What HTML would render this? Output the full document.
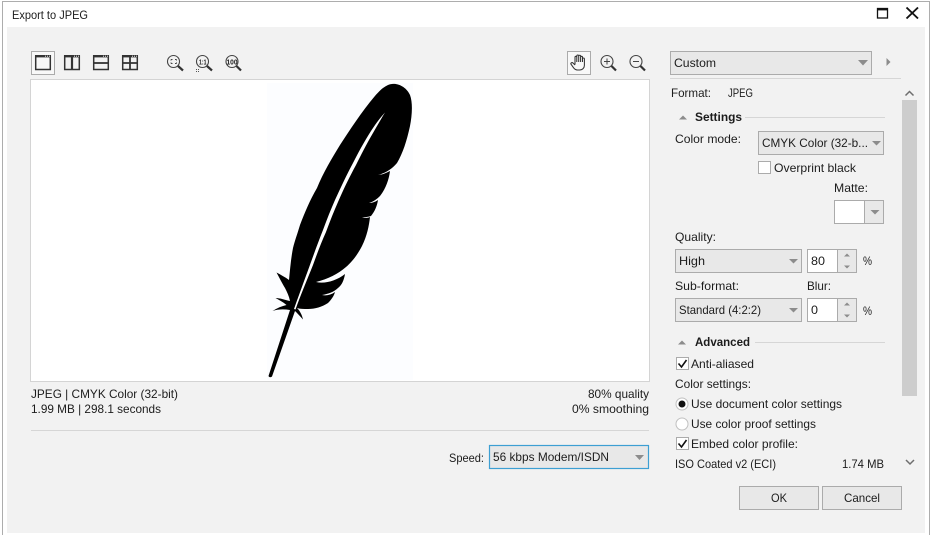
<!DOCTYPE html>
<html>
<head>
<meta charset="utf-8">
<style>
html,body{margin:0;padding:0;width:930px;height:535px;overflow:hidden;background:#fff}
svg{display:block}
text{font-family:"Liberation Sans",sans-serif;font-size:12px;fill:#1c1c1c}
.b{font-weight:bold}
.c{fill:#e8e8e8;stroke:#ababab;stroke-width:1}
.w{fill:#fff;stroke:#ababab;stroke-width:1}
.i{fill:none;stroke:#333;stroke-width:1.5}
.z{fill:none;stroke:#444;stroke-width:1.1}
.h{fill:none;stroke:#333;stroke-width:2.2}
.a{fill:#8c8c8c}
.l{stroke:#d6d6d6;stroke-width:1}
</style>
</head>
<body>
<svg width="930" height="535" viewBox="0 0 930 535" xmlns="http://www.w3.org/2000/svg">
<!-- window -->
<rect width="930" height="535" fill="#fff"/>
<path d="M2.5 535V1.5H929.5V535" fill="none" stroke="#adadad" stroke-width="1"/>
<rect x="7" y="27" width="918" height="506" fill="#f2f2f2"/>
<text x="12" y="19" textLength="76" lengthAdjust="spacingAndGlyphs">Export to JPEG</text>
<rect x="877.5" y="8.5" width="10" height="9.5" fill="none" stroke="#111" stroke-width="1.3"/>
<rect x="877" y="8" width="11" height="2.4" fill="#111"/>
<path d="M906.5 7.5L918 18.5M918 7.5L906.5 18.5" stroke="#111" stroke-width="1.9" fill="none"/>

<!-- left toolbar -->
<rect x="31.5" y="51.5" width="23" height="23" fill="#f8f8f8" stroke="#ababab"/>
<g class="i">
<rect x="35.7" y="56" width="14.6" height="13.5"/>
<rect x="64.7" y="56" width="14.6" height="13.5"/>
<path d="M72 56V69.5" stroke-width="2.2"/>
<rect x="93.7" y="56" width="14.6" height="13.5"/>
<path d="M93.7 63H108.3" stroke-width="1.8"/>
<rect x="122.7" y="56" width="14.6" height="13.5"/>
<path d="M122.7 63H137.3M130 56V69.5" stroke-width="1.8"/>
</g>
<g fill="#333">
<rect x="35" y="55" width="16" height="2.4"/><rect x="64" y="55" width="16" height="2.4"/>
<rect x="93" y="55" width="16" height="2.4"/><rect x="122" y="55" width="16" height="2.4"/>
</g>
<g fill="#e8e8e8">
<rect x="45" y="55.7" width="1" height="1"/><rect x="47" y="55.7" width="1" height="1"/><rect x="49" y="55.7" width="1" height="1"/>
<rect x="74" y="55.7" width="1" height="1"/><rect x="76" y="55.7" width="1" height="1"/><rect x="78" y="55.7" width="1" height="1"/>
<rect x="103" y="55.7" width="1" height="1"/><rect x="105" y="55.7" width="1" height="1"/><rect x="107" y="55.7" width="1" height="1"/>
<rect x="132" y="55.7" width="1" height="1"/><rect x="134" y="55.7" width="1" height="1"/><rect x="136" y="55.7" width="1" height="1"/>
</g>

<!-- zoom icons -->
<circle class="z" cx="173.5" cy="61.5" r="6"/>
<path class="h" d="M178 66L183 70.5"/>
<path d="M171 59.5h1.5M175 59.5h1.5M171 63.5h1.5M175 63.5h1.5M171 59.5v1M176.5 59.5v1M171 62.5v1M176.5 62.5v1" stroke="#444" stroke-width="1" fill="none"/>
<circle class="z" cx="202.5" cy="61.5" r="6"/>
<path class="h" d="M207 66L212 70.5"/>
<text x="199" y="64.3" textLength="7.5" lengthAdjust="spacingAndGlyphs" style="font-size:7px;font-weight:bold">1:1</text>
<path d="M196 69.5h1M198 69.5h1M196 71.5h1M198 71.5h1" stroke="#555" stroke-width="1"/>
<circle class="z" cx="232" cy="61.5" r="6"/>
<path class="h" d="M236.5 66L241 70.5"/>
<text x="226.5" y="64.3" textLength="11" lengthAdjust="spacingAndGlyphs" style="font-size:7px;font-weight:bold">100</text>

<!-- right toolbar -->
<rect x="567.5" y="51.5" width="23" height="23" fill="#f8f8f8" stroke="#ababab"/>
<path d="M575 64.5V57.3c0-1.3 1.8-1.3 1.8 0V62M576.8 62V56c0-1.3 1.9-1.3 1.9 0V62M578.7 62V56.2c0-1.3 1.9-1.3 1.9 0V62M580.6 62V57.3c0-1.3 1.9-1.3 1.9 0V62M582.5 62V59c0-1.3 1.9-1.3 1.9 0v6.3c0 2.6-1.9 4.7-4.8 4.7h-2.2c-2.1 0-3-1-4-2.4l-2.3-3.3c-.8-1.2.8-2.4 1.9-1.3L575 65" fill="none" stroke="#333" stroke-width="1.05"/>
<circle class="z" cx="607" cy="61.5" r="6"/>
<path class="h" d="M611.5 66L616 70.5"/>
<path d="M604 61.5h6M607 58.5v6" stroke="#444" stroke-width="1" fill="none"/>
<circle class="z" cx="636" cy="61.5" r="6"/>
<path class="h" d="M640.5 66L645 70.5"/>
<path d="M633 61.5h6" stroke="#444" stroke-width="1" fill="none"/>

<!-- preview -->
<rect x="30.5" y="79.5" width="619" height="302" fill="#fff" stroke="#d4d4d4"/>
<rect x="267" y="83" width="146" height="297" fill="#fcfdff"/>
<path fill="#000" d="M392 84C399 83 407 88 410 95C413 103 412 116 410 126C407 140 403 153 397 163C391 170 385 173 378 175C382 175 386 173 390 171C389 180 385 190 380 196C377 199 373 202 369 203C372 203 375 202 378 200C377 206 375 211 371 216C368 217 365 217 362 218C365 218 368 218 370 217C369 226 367 236 362 246C358 254 352 262 346 267C338 274 328 279 316 282C325 284 336 281 345 274C344 280 342 285 338 288C334 292 328 294 322 295C326 296 331 295 335 292C334 296 331 300 328 303C322 307 315 309 308 309C304 309 300 309 297 308C300 311 302 315 303 319.5C300 316 297 313 295 311L272 376.5C271 377.5 269 377.5 268.5 376L290 310C284 309 278 309 272.5 311C277 308 282 306 286.5 305C283 302 279 300 275.5 298C280 298 285 300 290 301C289 296 287 292 285 288C282 283 279 277 276.5 272.5C281 275 285 277 289 280C290 270 291 258 293 248C295 240 297 235 300 225C305 212 310 200 317 188C323 173 332 158 340 145C349 131 359 116 370 102C375 96 379 91 383 88C386 86 389 84 392 84Z"/>
<path fill="#fff" d="M385 112.5C379 119 375 125 371 131C364 142 358 153 353 163C347 174 341 187 335 200C331 209 327 219 323 230C319 240 315 251 311 262C306 276 300 292 294 309L295.5 309.5C301 294 307 280 313 265C317 254 321 243 326 232C330 221 334 211 338 202C344 188 350 176 356 165C361 155 366 145 373 133C377 126 381 119 385 112.5Z"/>

<!-- status -->
<text x="31" y="398" textLength="147" lengthAdjust="spacingAndGlyphs">JPEG | CMYK Color (32-bit)</text>
<text x="31" y="413" textLength="130" lengthAdjust="spacingAndGlyphs">1.99 MB | 298.1 seconds</text>
<text x="588" y="398" textLength="61" lengthAdjust="spacingAndGlyphs">80% quality</text>
<text x="572" y="413" textLength="77" lengthAdjust="spacingAndGlyphs">0% smoothing</text>
<line class="l" x1="31" y1="430.5" x2="649" y2="430.5"/>
<text x="449" y="462" textLength="35" lengthAdjust="spacingAndGlyphs">Speed:</text>
<rect x="489.5" y="445.5" width="159" height="23" fill="#e8e8e8" stroke="#3d9fd3" stroke-width="1.2"/>
<text x="493" y="461" textLength="116" lengthAdjust="spacingAndGlyphs">56 kbps Modem/ISDN</text>
<path class="a" d="M635 455h9l-4.5 5z"/>

<!-- preset -->
<rect class="c" x="670.5" y="51.5" width="201" height="23"/>
<text x="674" y="67" textLength="42" lengthAdjust="spacingAndGlyphs">Custom</text>
<path class="a" d="M858 60h10l-5 5.5z"/>
<path class="a" d="M886.5 58v8l4-4z"/>
<line class="l" x1="670" y1="78.5" x2="901" y2="78.5"/>

<!-- scrollbar -->
<rect x="902" y="100" width="15" height="296" fill="#cdcdcd"/>
<path d="M905.5 95.5L909.5 91.5L913.5 95.5M906 460L910 464L914 460" fill="none" stroke="#6e6e6e" stroke-width="1.5"/>

<!-- format -->
<text x="671" y="97" textLength="40" lengthAdjust="spacingAndGlyphs">Format:</text>
<text x="728" y="97" textLength="25" lengthAdjust="spacingAndGlyphs">JPEG</text>
<path class="a" d="M679 119.5h8l-4-4z"/>
<text class="b" x="695" y="121" textLength="47" lengthAdjust="spacingAndGlyphs">Settings</text>
<line class="l" x1="745" y1="117.5" x2="885" y2="117.5"/>

<text x="675" y="143" textLength="66" lengthAdjust="spacingAndGlyphs">Color mode:</text>
<rect class="c" x="758.5" y="131.5" width="125" height="23"/>
<text x="762" y="147" textLength="106" lengthAdjust="spacingAndGlyphs">CMYK Color (32-b...</text>
<path class="a" d="M872 141h9l-4.5 4.5z"/>
<rect class="w" x="758.5" y="161.5" width="12" height="12"/>
<text x="774" y="172" textLength="82" lengthAdjust="spacingAndGlyphs">Overprint black</text>
<text x="834" y="192" textLength="34" lengthAdjust="spacingAndGlyphs">Matte:</text>
<rect class="c" x="834.5" y="200.5" width="49" height="23"/>
<rect class="w" x="834.5" y="200.5" width="30" height="23"/>
<path class="a" d="M870.5 210h9l-4.5 4.5z"/>

<text x="675" y="241" textLength="41" lengthAdjust="spacingAndGlyphs">Quality:</text>
<rect class="c" x="675.5" y="249.5" width="126" height="23"/>
<text x="679" y="265" textLength="26" lengthAdjust="spacingAndGlyphs">High</text>
<path class="a" d="M789 259h9l-4.5 4.5z"/>
<rect class="c" x="807.5" y="249.5" width="49" height="23"/>
<rect class="w" x="807.5" y="249.5" width="30" height="23"/>
<text x="811" y="265" textLength="14" lengthAdjust="spacingAndGlyphs">80</text>
<path class="a" d="M844 256.5h6l-3-3zM844 265.5h6l-3 3z"/>
<text x="863" y="265" textLength="9" lengthAdjust="spacingAndGlyphs">%</text>

<text x="675" y="290" textLength="64" lengthAdjust="spacingAndGlyphs">Sub-format:</text>
<text x="807" y="290" textLength="24" lengthAdjust="spacingAndGlyphs">Blur:</text>
<rect class="c" x="675.5" y="298.5" width="126" height="23"/>
<text x="679" y="314" textLength="82" lengthAdjust="spacingAndGlyphs">Standard (4:2:2)</text>
<path class="a" d="M789 308h9l-4.5 4.5z"/>
<rect class="c" x="807.5" y="298.5" width="49" height="23"/>
<rect class="w" x="807.5" y="298.5" width="30" height="23"/>
<text x="811" y="314" textLength="7" lengthAdjust="spacingAndGlyphs">0</text>
<path class="a" d="M844 305.5h6l-3-3zM844 314.5h6l-3 3z"/>
<text x="863" y="315" textLength="9" lengthAdjust="spacingAndGlyphs">%</text>

<!-- advanced -->
<path class="a" d="M678 344.5h8l-4-4z"/>
<text class="b" x="695" y="346" textLength="55" lengthAdjust="spacingAndGlyphs">Advanced</text>
<line class="l" x1="755" y1="342.5" x2="885" y2="342.5"/>
<rect class="w" x="676.5" y="357.5" width="12" height="12"/>
<path d="M678.5 363.5L681.5 367L686.5 360" fill="none" stroke="#111" stroke-width="1.6"/>
<text x="691" y="368" textLength="63" lengthAdjust="spacingAndGlyphs">Anti-aliased</text>
<text x="675" y="388" textLength="76" lengthAdjust="spacingAndGlyphs">Color settings:</text>
<circle cx="682" cy="404" r="6" fill="#fff" stroke="#c0c0c0"/>
<circle cx="682" cy="404" r="3.5" fill="#111"/>
<text x="691" y="408" textLength="151" lengthAdjust="spacingAndGlyphs">Use document color settings</text>
<circle cx="682" cy="424" r="6" fill="#fff" stroke="#c0c0c0"/>
<text x="691" y="428" textLength="125" lengthAdjust="spacingAndGlyphs">Use color proof settings</text>
<rect class="w" x="676.5" y="437.5" width="12" height="12"/>
<path d="M678.5 443.5L681.5 447L686.5 440" fill="none" stroke="#111" stroke-width="1.6"/>
<text x="691" y="448" textLength="107" lengthAdjust="spacingAndGlyphs">Embed color profile:</text>
<text x="675" y="468" textLength="101" lengthAdjust="spacingAndGlyphs">ISO Coated v2 (ECI)</text>
<text x="842" y="468" textLength="42" lengthAdjust="spacingAndGlyphs">1.74 MB</text>

<!-- buttons -->
<rect class="c" x="739.5" y="486.5" width="79" height="23"/>
<text x="771" y="502" textLength="16" lengthAdjust="spacingAndGlyphs">OK</text>
<rect class="c" x="822.5" y="486.5" width="79" height="23"/>
<text x="844" y="502" textLength="36" lengthAdjust="spacingAndGlyphs">Cancel</text>
</svg>
</body>
</html>
